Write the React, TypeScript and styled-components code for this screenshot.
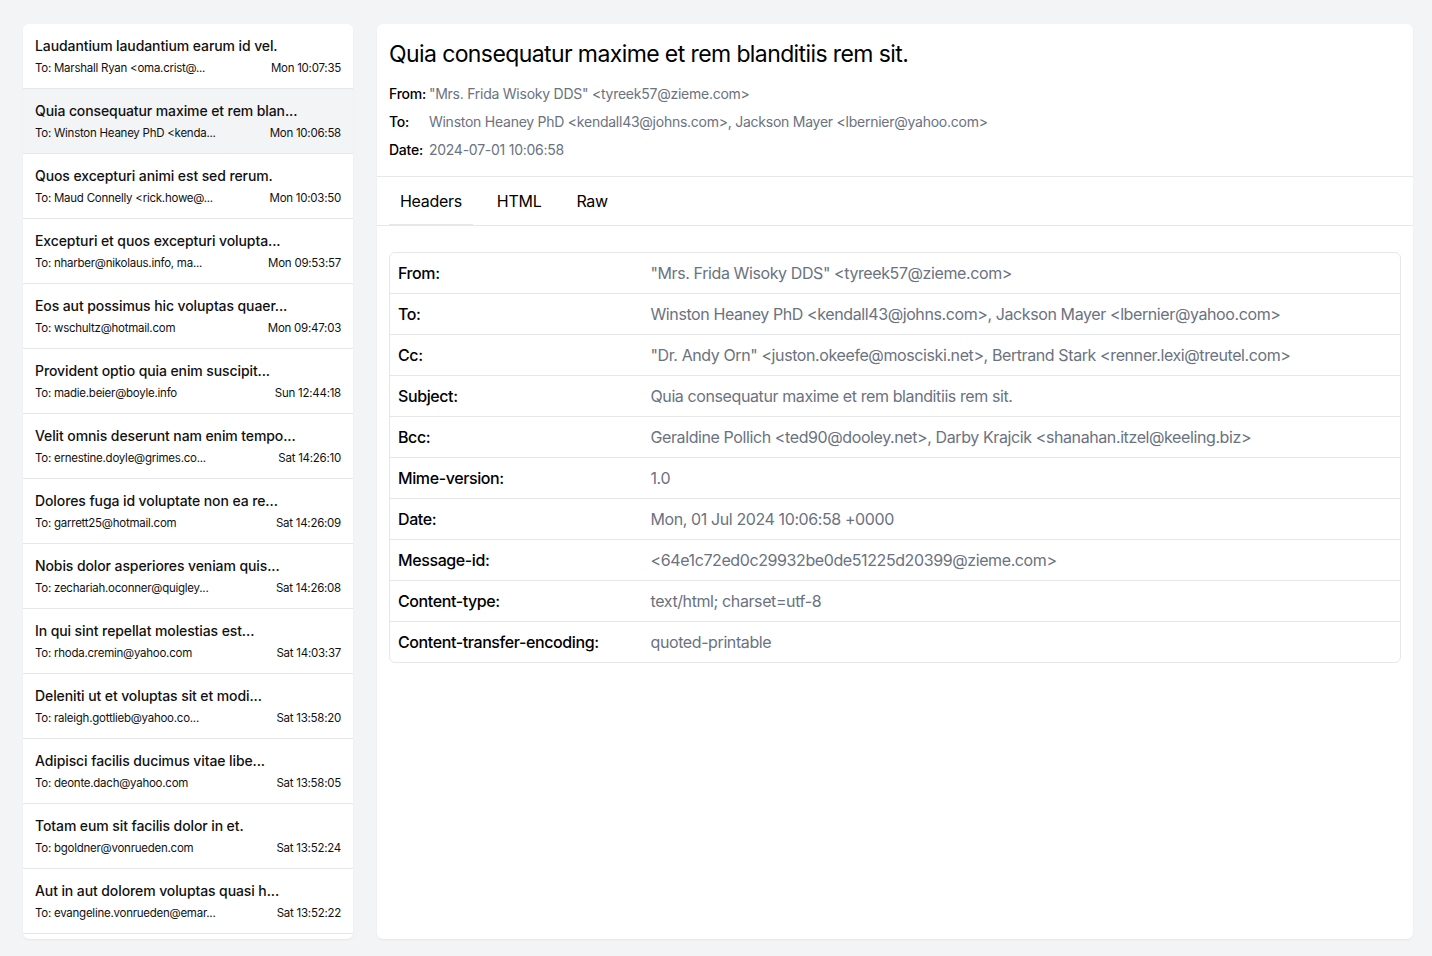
import React from "react";
import styled, { createGlobalStyle } from "styled-components";

const GlobalStyle = createGlobalStyle`
  html, body { margin: 0; padding: 0; }
  body {
    background: #f3f4f6;
    font-family: Inter, "Noto Sans", "Liberation Sans", sans-serif;
    color: #111;
  }
  * { box-sizing: border-box; }
`;

const Page = styled.div`
  height: 100vh;
  padding: 24px 19px 17px 23px;
  display: grid;
  grid-template-columns: 330px 1fr;
  grid-template-rows: minmax(0, 1fr);
  gap: 24px;
  overflow: hidden;
`;

const Panel = styled.div`
  background: #fff;
  border-radius: 6px;
  box-shadow: 0 1px 2px rgba(0, 0, 0, 0.06);
  overflow: hidden;
  min-height: 0;
`;

const List = styled.ul`
  list-style: none;
  margin: 0;
  padding: 0;
`;

const Item = styled.li<{ $active?: boolean }>`
  padding: 12px 12px;
  border-bottom: 1px solid #e5e7eb;
  background: ${(p) => (p.$active ? "#f3f4f6" : "#fff")};
  height: 65px;
`;

const ItemTitle = styled.div`
  font-size: 14px;
  line-height: 20px;
  font-weight: 500;
  letter-spacing: -0.1px;
  color: #111;
  white-space: nowrap;
  margin-bottom: 4px;
`;

const ItemMeta = styled.div`
  display: flex;
  justify-content: space-between;
  font-size: 11.5px;
  letter-spacing: -0.25px;
  line-height: 16px;
  color: #111;
  white-space: nowrap;
`;

const Detail = styled(Panel)`
  display: flex;
  flex-direction: column;
`;

const Header = styled.div`
  padding: 16px 12px 16px 12px;
  border-bottom: 1px solid #e5e7eb;
`;

const Subject = styled.h1`
  margin: 0 0 16px 0;
  font-size: 23px;
  line-height: 28px;
  letter-spacing: -0.6px;
  font-weight: 400;
  color: #000;
`;

const Meta = styled.div`
  display: grid;
  grid-template-columns: auto 1fr;
  column-gap: 3px;
  row-gap: 8px;
  font-size: 14px;
  line-height: 20px;
  letter-spacing: -0.25px;
`;

const MetaLabel = styled.span`
  font-weight: 500;
  color: #000;
`;

const MetaValue = styled.span`
  color: #6b7280;
`;

const Tabs = styled.div`
  display: flex;
  gap: 13px;
  padding: 0 12px;
  border-bottom: 1px solid #e5e7eb;
`;

const Tab = styled.button<{ $active?: boolean }>`
  font-family: inherit;
  font-size: 16px;
  line-height: 24px;
  letter-spacing: -0.3px;
  padding: 12px 11px 11px;
  background: none;
  border: none;
  border-bottom: 2px solid ${(p) => (p.$active ? "#e5e7eb" : "transparent")};
  margin-bottom: -1px;
  color: #000;
  cursor: pointer;
`;

const Body = styled.div`
  padding: 26px 12px 12px;
`;

const Table = styled.table`
  width: 100%;
  border-collapse: separate;
  border-spacing: 0;
  border: 1px solid #e5e7eb;
  border-radius: 6px;
  font-size: 16px;
  line-height: 24px;
  letter-spacing: -0.4px;
`;

const Row = styled.tr`
  & + & td { border-top: 1px solid #e5e7eb; }
`;

const Label = styled.td`
  width: 25%;
  padding: 8px 8px;
  font-weight: 500;
  color: #000;
  white-space: nowrap;
`;

const Value = styled.td`
  padding: 8px 8px;
  color: #6b7280;
`;

const emails = [
  ["Laudantium laudantium earum id vel.", "To: Marshall Ryan <oma.crist@...", "Mon 10:07:35"],
  ["Quia consequatur maxime et rem blan...", "To: Winston Heaney PhD <kenda...", "Mon 10:06:58"],
  ["Quos excepturi animi est sed rerum.", "To: Maud Connelly <rick.howe@...", "Mon 10:03:50"],
  ["Excepturi et quos excepturi volupta...", "To: nharber@nikolaus.info, ma...", "Mon 09:53:57"],
  ["Eos aut possimus hic voluptas quaer...", "To: wschultz@hotmail.com", "Mon 09:47:03"],
  ["Provident optio quia enim suscipit...", "To: madie.beier@boyle.info", "Sun 12:44:18"],
  ["Velit omnis deserunt nam enim tempo...", "To: ernestine.doyle@grimes.co...", "Sat 14:26:10"],
  ["Dolores fuga id voluptate non ea re...", "To: garrett25@hotmail.com", "Sat 14:26:09"],
  ["Nobis dolor asperiores veniam quis...", "To: zechariah.oconner@quigley...", "Sat 14:26:08"],
  ["In qui sint repellat molestias est...", "To: rhoda.cremin@yahoo.com", "Sat 14:03:37"],
  ["Deleniti ut et voluptas sit et modi...", "To: raleigh.gottlieb@yahoo.co...", "Sat 13:58:20"],
  ["Adipisci facilis ducimus vitae libe...", "To: deonte.dach@yahoo.com", "Sat 13:58:05"],
  ["Totam eum sit facilis dolor in et.", "To: bgoldner@vonrueden.com", "Sat 13:52:24"],
  ["Aut in aut dolorem voluptas quasi h...", "To: evangeline.vonrueden@emar...", "Sat 13:52:22"],
];

const headers = [
  ["From:", "\"Mrs. Frida Wisoky DDS\" <tyreek57@zieme.com>"],
  ["To:", "Winston Heaney PhD <kendall43@johns.com>, Jackson Mayer <lbernier@yahoo.com>"],
  ["Cc:", "\"Dr. Andy Orn\" <juston.okeefe@mosciski.net>, Bertrand Stark <renner.lexi@treutel.com>"],
  ["Subject:", "Quia consequatur maxime et rem blanditiis rem sit."],
  ["Bcc:", "Geraldine Pollich <ted90@dooley.net>, Darby Krajcik <shanahan.itzel@keeling.biz>"],
  ["Mime-version:", "1.0"],
  ["Date:", "Mon, 01 Jul 2024 10:06:58 +0000"],
  ["Message-id:", "<64e1c72ed0c29932be0de51225d20399@zieme.com>"],
  ["Content-type:", "text/html; charset=utf-8"],
  ["Content-transfer-encoding:", "quoted-printable"],
];

export default function App() {
  return (
    <>
      <GlobalStyle />
      <Page>
        <Panel>
          <List>
            {emails.map(([t, to, time], i) => (
              <Item key={i} $active={i === 1}>
                <ItemTitle>{t}</ItemTitle>
                <ItemMeta>
                  <span>{to}</span>
                  <span>{time}</span>
                </ItemMeta>
              </Item>
            ))}
          </List>
        </Panel>
        <Detail>
          <Header>
            <Subject>Quia consequatur maxime et rem blanditiis rem sit.</Subject>
            <Meta>
              <MetaLabel>From:</MetaLabel>
              <MetaValue>"Mrs. Frida Wisoky DDS" &lt;tyreek57@zieme.com&gt;</MetaValue>
              <MetaLabel>To:</MetaLabel>
              <MetaValue>Winston Heaney PhD &lt;kendall43@johns.com&gt;, Jackson Mayer &lt;lbernier@yahoo.com&gt;</MetaValue>
              <MetaLabel>Date:</MetaLabel>
              <MetaValue>2024-07-01 10:06:58</MetaValue>
            </Meta>
          </Header>
          <Tabs>
            <Tab $active>Headers</Tab>
            <Tab>HTML</Tab>
            <Tab>Raw</Tab>
          </Tabs>
          <Body>
            <Table>
              <tbody>
                {headers.map(([k, v]) => (
                  <Row key={k}>
                    <Label>{k}</Label>
                    <Value>{v}</Value>
                  </Row>
                ))}
              </tbody>
            </Table>
          </Body>
        </Detail>
      </Page>
    </>
  );
}
